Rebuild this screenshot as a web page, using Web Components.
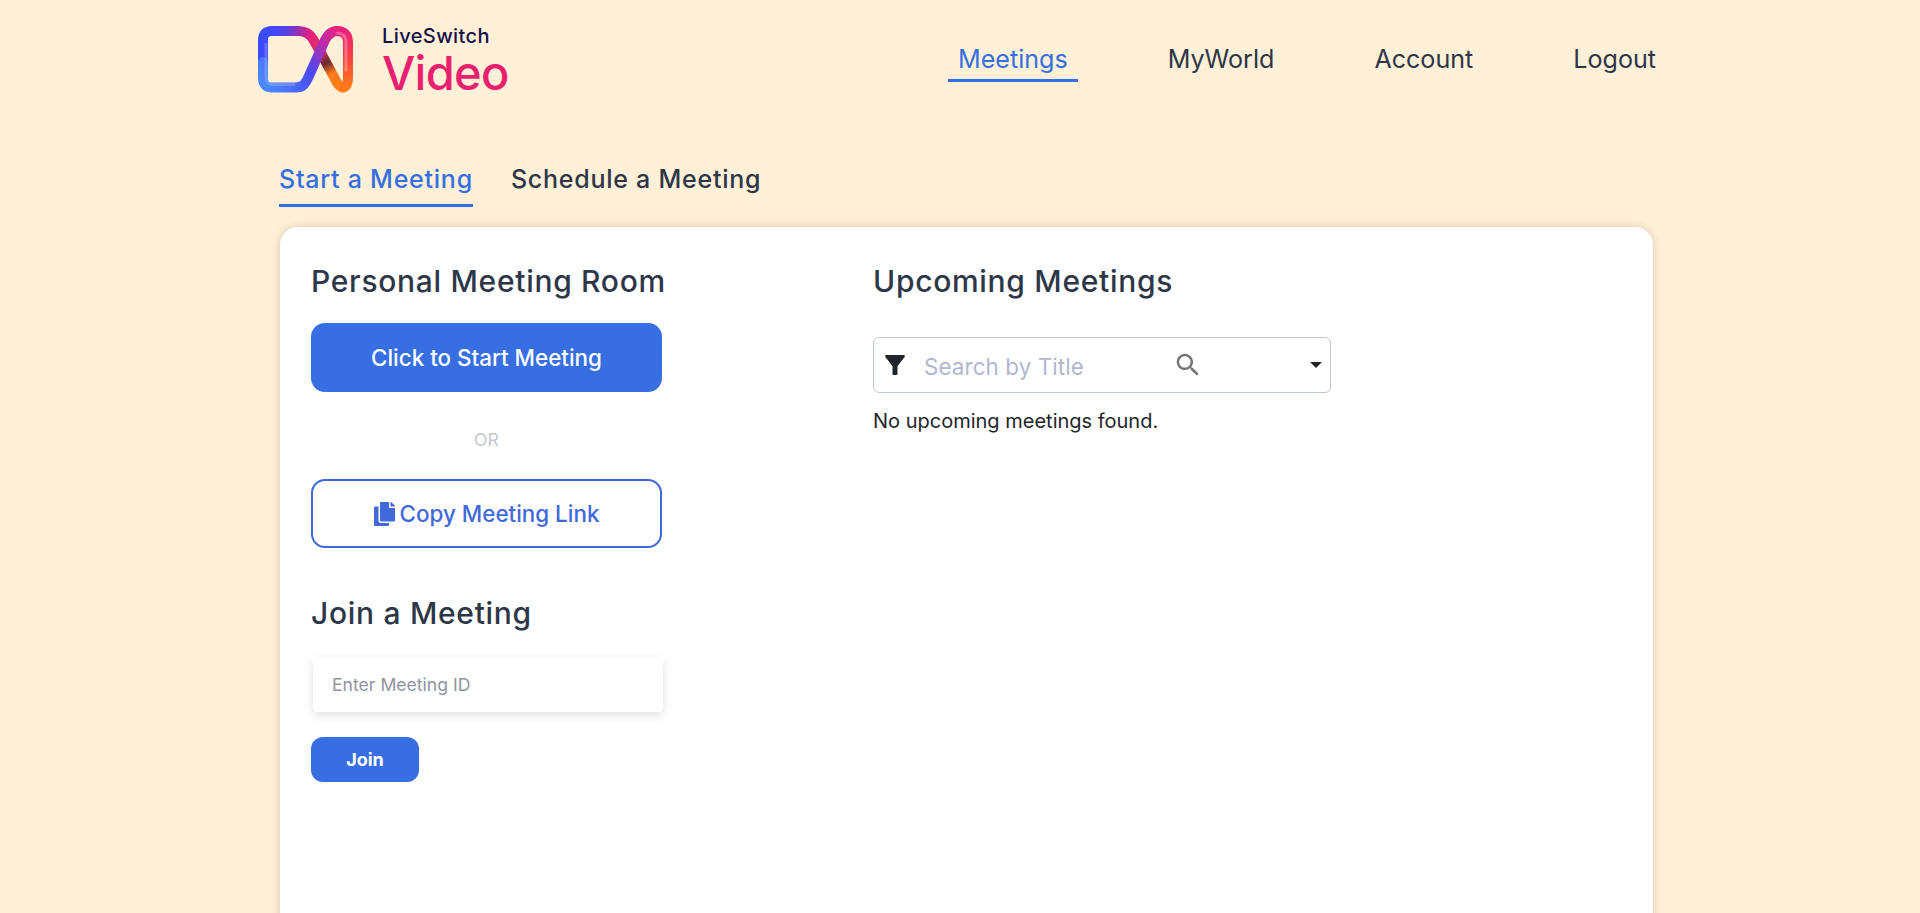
<!DOCTYPE html>
<html lang="en">
<head>
<meta charset="utf-8">
<title>LiveSwitch Video</title>
<style>
    html, body {
        margin: 0;
        height: 100%;
        overflow: hidden;
        background: #fff0d7;
        font-family: "Inter", "Liberation Sans", sans-serif;
        color: #2d3748;
    }
</style>
</head>
<body>
<site-header>
    <nav-link active>Meetings</nav-link>
    <nav-link>MyWorld</nav-link>
    <nav-link>Account</nav-link>
    <nav-link>Logout</nav-link>
</site-header>
<meeting-tabs>
    <tab-link active>Start a Meeting</tab-link>
    <tab-link>Schedule a Meeting</tab-link>
</meeting-tabs>
<meeting-card>
    <start-panel slot="left"></start-panel>
    <upcoming-panel slot="right"></upcoming-panel>
</meeting-card>

<script>
class BrandLogo extends HTMLElement {
    constructor() {
        super();
        this.shadowDOM = this.attachShadow({mode: "open"});
        this.shadowDOM.innerHTML = `
            <style>
                :host {
                    display: flex;
                    align-items: center;
                    gap: 29px;
                }
                svg {
                    display: block;
                }
                .words {
                    display: flex;
                    flex-direction: column;
                    font-family: "Inter", "Lato", sans-serif;
                }
                .top {
                    font-size: 20px;
                    line-height: 24px;
                    font-weight: 500;
                    letter-spacing: .4px;
                    color: #14104a;
                }
                .bottom {
                    margin-top: 3px;
                    font-size: 47px;
                    line-height: 44px;
                    font-weight: 450;
                    color: #ea1f6f;
                    letter-spacing: -.7px;
                }
            </style>
            <svg width="95" height="67" viewBox="258 26 95 67" fill="none" stroke-width="10" stroke-linecap="round">
                <defs>
                    <linearGradient id="topLeft" gradientUnits="userSpaceOnUse" x1="268" y1="40" x2="325" y2="50">
                        <stop offset="0" stop-color="#3a4bfb"/>
                        <stop offset=".3" stop-color="#5a3fe0"/>
                        <stop offset=".7" stop-color="#e2207f"/>
                        <stop offset="1" stop-color="#e93a50"/>
                    </linearGradient>
                    <linearGradient id="cross" gradientUnits="userSpaceOnUse" x1="322" y1="54" x2="338" y2="84">
                        <stop offset="0" stop-color="#c9304f"/>
                        <stop offset=".3" stop-color="#6a2a32"/>
                        <stop offset=".65" stop-color="#ff7a1c"/>
                        <stop offset="1" stop-color="#ff7d18"/>
                    </linearGradient>
                    <linearGradient id="right" gradientUnits="userSpaceOnUse" x1="348" y1="88" x2="340" y2="30">
                        <stop offset="0" stop-color="#ff7d18"/>
                        <stop offset=".5" stop-color="#f5413f"/>
                        <stop offset="1" stop-color="#ee2080"/>
                    </linearGradient>
                    <linearGradient id="rise" gradientUnits="userSpaceOnUse" x1="266" y1="84" x2="338" y2="32">
                        <stop offset="0" stop-color="#4a86ff"/>
                        <stop offset=".5" stop-color="#4b48f0"/>
                        <stop offset=".75" stop-color="#b02fb4"/>
                        <stop offset="1" stop-color="#ec2080"/>
                    </linearGradient>
                </defs>
                <path stroke="url(#topLeft)" d="M263 62 V40 Q263 31 272 31 H298 C306 31 310 34 313 39 L322 55"/>
                <path stroke="url(#cross)" d="M322 55 L334 77 C337 84 340 87.500 343 87.500"/>
                <path stroke="url(#right)" d="M343 87.500 C346 87.500 348 84 348 78 V42 C348 35 344 31 337 31"/>
                <path stroke="url(#rise)" d="M263 62 V78 Q263 87.500 272 87.500 H296 C303 87.500 305 84 308 78 L325 40 C328 35 331 31 337 31"/>
                <path stroke="#fff" stroke-opacity=".2" stroke-width="3" d="M266 44 V76 Q266 84.500 274 84.500 H294"/>
                <path stroke="#fff" stroke-opacity=".28" stroke-width="3" d="M346 70 V42 C346 36 342 33 337 33"/>
            </svg>
            <div class="words">
                <span class="top">LiveSwitch</span>
                <span class="bottom">Video</span>
            </div>`;
    }
}
customElements.define("brand-logo", BrandLogo);

class SiteHeader extends HTMLElement {
    constructor() {
        super();
        this.shadowDOM = this.attachShadow({mode: "open"});
        this.shadowDOM.innerHTML = `
            <style>
                :host {
                    display: flex;
                    align-items: center;
                    justify-content: space-between;
                    box-sizing: border-box;
                    height: 119px;
                    padding: 0 254px 0 258px;
                }
                nav {
                    display: flex;
                    gap: 80px;
                }
            </style>
            <brand-logo></brand-logo>
            <nav><slot></slot></nav>`;
    }
}
customElements.define("site-header", SiteHeader);

class NavLink extends HTMLElement {
    constructor() {
        super();
        this.shadowDOM = this.attachShadow({mode: "open"});
        this.shadowDOM.innerHTML = `
            <style>
                :host {
                    display: block;
                    padding: 0 10px 2px;
                    font-size: 25.1px;
                    line-height: 36px;
                    color: #2d3748;
                    border-bottom: 3px solid transparent;
                    margin-top: 4px;
                }
                :host([active]) {
                    color: #3470e4;
                    border-bottom-color: #3470e4;
                }
            </style>
            <slot></slot>`;
    }
}
customElements.define("nav-link", NavLink);

class MeetingTabs extends HTMLElement {
    constructor() {
        super();
        this.shadowDOM = this.attachShadow({mode: "open"});
        this.shadowDOM.innerHTML = `
            <style>
                :host {
                    display: flex;
                    gap: 38px;
                    padding-left: 279px;
                    padding-top: 42px;
                }
            </style>
            <slot></slot>`;
    }
}
customElements.define("meeting-tabs", MeetingTabs);

class TabLink extends HTMLElement {
    constructor() {
        super();
        this.shadowDOM = this.attachShadow({mode: "open"});
        this.shadowDOM.innerHTML = `
            <style>
                :host {
                    display: block;
                    font-size: 25px;
                    line-height: 36px;
                    font-weight: 550;
                    letter-spacing: .75px;
                    padding-bottom: 7px;
                    border-bottom: 3px solid transparent;
                    color: #2d3748;
                }
                :host([active]) {
                    color: #3470e4;
                    border-bottom-color: #3470e4;
                }
            </style>
            <slot></slot>`;
    }
}
customElements.define("tab-link", TabLink);

class MeetingCard extends HTMLElement {
    constructor() {
        super();
        this.shadowDOM = this.attachShadow({mode: "open"});
        this.shadowDOM.innerHTML = `
            <style>
                :host {
                    display: grid;
                    grid-template-columns: 351px 1fr;
                    column-gap: 211px;
                    box-sizing: border-box;
                    width: 1373px;
                    height: 900px;
                    margin: 20px 0 0 280px;
                    padding: 34px 31px;
                    background: #fff;
                    border-radius: 18px;
                    box-shadow: 0 0 8px rgba(70, 60, 50, .22);
                }
            </style>
            <slot name="left"></slot>
            <slot name="right"></slot>`;
    }
}
customElements.define("meeting-card", MeetingCard);

class PanelTitle extends HTMLElement {
    constructor() {
        super();
        this.shadowDOM = this.attachShadow({mode: "open"});
        this.shadowDOM.innerHTML = `
            <style>
                :host {
                    display: block;
                    font-size: 30px;
                    line-height: 40px;
                    font-weight: 550;
                    letter-spacing: .7px;
                    white-space: nowrap;
                    color: #2d3748;
                }
            </style>
            <slot></slot>`;
    }
}
customElements.define("panel-title", PanelTitle);

class ActionButton extends HTMLElement {
    constructor() {
        super();
        this.shadowDOM = this.attachShadow({mode: "open"});
        this.shadowDOM.innerHTML = `
            <style>
                :host {
                    display: flex;
                    align-items: center;
                    justify-content: center;
                    gap: 5px;
                    box-sizing: border-box;
                    height: 69px;
                    border-radius: 14px;
                    background: #376ee2;
                    color: #fff;
                    font-size: 22.4px;
                    font-weight: 500;
                }
                :host([outline]) {
                    background: #fff;
                    color: #4169d9;
                    border: 2px solid #4169d9;
                }
                :host([small]) {
                    width: 108px;
                    height: 45px;
                    border-radius: 12px;
                    font-size: 18px;
                    font-weight: 700;
                }
            </style>
            <slot></slot>`;
    }
}
customElements.define("action-button", ActionButton);

class StartPanel extends HTMLElement {
    constructor() {
        super();
        this.shadowDOM = this.attachShadow({mode: "open"});
        this.shadowDOM.innerHTML = `
            <style>
                :host {
                    display: flex;
                    flex-direction: column;
                }
                .start {
                    margin-top: 22px;
                }
                .or {
                    text-align: center;
                    font-size: 17.6px;
                    line-height: 20px;
                    color: #c3c7d0;
                    margin: 38px 0 29px;
                }
                .copy svg {
                    display: block;
                    width: 21px;
                    height: 24px;
                    fill: currentColor;
                }
                .join-title {
                    margin-top: 45px;
                }
                .field {
                    box-sizing: border-box;
                    display: flex;
                    align-items: center;
                    width: 350px;
                    height: 55px;
                    margin: 24px 0 25px 2px;
                    padding-left: 19px;
                    font-size: 17.6px;
                    color: #8f94a0;
                    background: #fff;
                    border-radius: 4px;
                    box-shadow: 0 3px 10px rgba(0, 0, 0, .12);
                }
            </style>
            <panel-title>Personal Meeting Room</panel-title>
            <action-button class="start">Click to Start Meeting</action-button>
            <div class="or">OR</div>
            <action-button class="copy" outline>
                <svg viewBox="0 0 448 512"><path d="M320 448v40c0 13.255-10.745 24-24 24H24c-13.255 0-24-10.745-24-24V120c0-13.255 10.745-24 24-24h72v296c0 30.879 25.121 56 56 56h168zm0-344V0H152c-13.255 0-24 10.745-24 24v368c0 13.255 10.745 24 24 24h272c13.255 0 24-10.745 24-24V128H344c-13.2 0-24-10.8-24-24zm120.971-31.029L375.029 7.029A24 24 0 0 0 358.059 0H352v96h96v-6.059a24 24 0 0 0-7.029-16.97z"/></svg>
                Copy Meeting Link
            </action-button>
            <panel-title class="join-title">Join a Meeting</panel-title>
            <div class="field">Enter Meeting ID</div>
            <action-button small>Join</action-button>`;
    }
}
customElements.define("start-panel", StartPanel);

class UpcomingPanel extends HTMLElement {
    constructor() {
        super();
        this.shadowDOM = this.attachShadow({mode: "open"});
        this.shadowDOM.innerHTML = `
            <style>
                :host {
                    display: block;
                }
                .search {
                    box-sizing: border-box;
                    display: flex;
                    align-items: center;
                    width: 458px;
                    height: 56px;
                    margin-top: 36px;
                    border: 1px solid #bfc5da;
                    border-radius: 6px;
                    font-size: 22.4px;
                    color: #b0b8d0;
                }
                .search svg {
                    display: block;
                    flex: none;
                }
                .filter {
                    margin-left: 6px;
                    fill: #212529;
                }
                .hint {
                    margin-left: 14px;
                    width: 249px;
                    padding-top: 3px;
                    letter-spacing: .1px;
                }
                .lens {
                    fill: #757575;
                }
                .caret {
                    margin-left: 107px;
                    fill: #212529;
                }
                p {
                    margin: 14px 0 0;
                    font-size: 20px;
                    line-height: 28px;
                    color: #212529;
                }
            </style>
            <panel-title>Upcoming Meetings</panel-title>
            <div class="search">
                <svg class="filter" width="30" height="30" viewBox="0 0 24 24"><path d="M4.25 5.61C6.270 8.200 10 13 10 13v6c0 .55.45 1 1 1h2c.55 0 1-.45 1-1v-6s3.720-4.800 5.740-7.390c.51-.66.04-1.610-.79-1.610H5.040c-.83 0-1.300.95-.79 1.610z"/></svg>
                <span class="hint">Search by Title</span>
                <svg class="lens" width="30" height="30" viewBox="0 0 24 24"><path d="M15.500 14h-.79l-.28-.27C15.410 12.590 16 11.110 16 9.500 16 5.910 13.090 3 9.500 3S3 5.910 3 9.500 5.910 16 9.500 16c1.610 0 3.090-.59 4.230-1.570l.27.28v.79l5 4.990L20.490 19l-4.990-5zm-6 0C7.010 14 5 11.990 5 9.500S7.010 5 9.500 5 14 7.010 14 9.500 11.990 14 9.500 14z"/></svg>
                <svg class="caret" width="12" height="6" viewBox="0 0 12 6"><path d="M0 0h12L6 6z"/></svg>
            </div>
            <p>No upcoming meetings found.</p>`;
    }
}
customElements.define("upcoming-panel", UpcomingPanel);
</script>
</body>
</html>
